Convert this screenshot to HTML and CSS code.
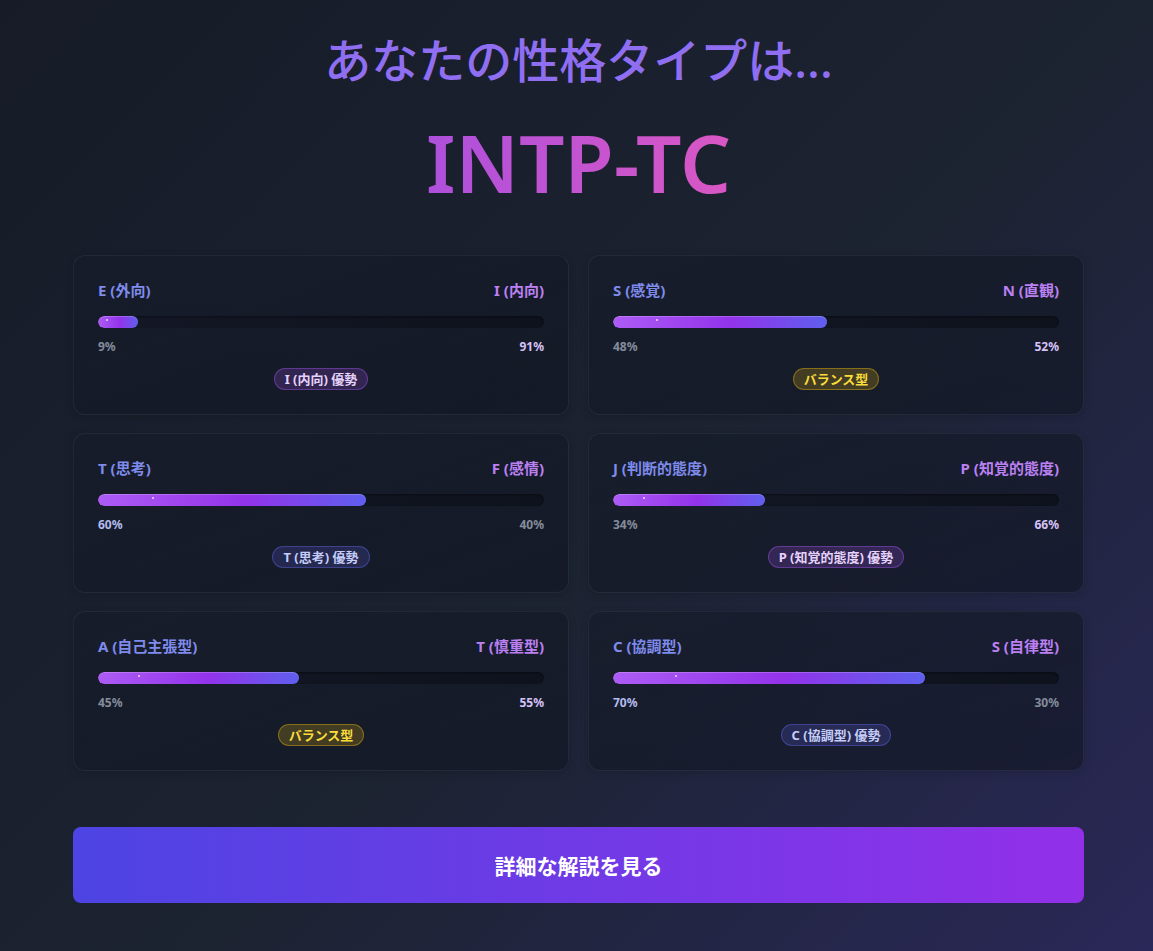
FILE: index.html
```html
<!DOCTYPE html>
<html lang="ja">
<head>
    <meta charset="UTF-8">
    <meta name="viewport" content="width=device-width, initial-scale=1.0">
    <title>性格タイプ診断 - 結果</title>
    <link rel="stylesheet" href="styles.css">
</head>
<body>
    <main class="result">
        <h1 class="result-title">あなたの性格タイプは...</h1>
        <div class="type-code">INTP-TC</div>

        <section class="axis-grid">
            <!-- E / I -->
            <div class="axis-card">
                <div class="axis-labels">
                    <span class="label-left">E (外向)</span>
                    <span class="label-right">I (内向)</span>
                </div>
                <div class="bar-track"><div class="bar-fill" style="width: 9%"></div></div>
                <div class="axis-percents">
                    <span class="pct">9%</span>
                    <span class="pct pct-right">91%</span>
                </div>
                <div class="badge-row"><span class="badge badge-right">I (内向) 優勢</span></div>
            </div>

            <!-- S / N -->
            <div class="axis-card">
                <div class="axis-labels">
                    <span class="label-left">S (感覚)</span>
                    <span class="label-right">N (直観)</span>
                </div>
                <div class="bar-track"><div class="bar-fill" style="width: 48%"></div></div>
                <div class="axis-percents">
                    <span class="pct">48%</span>
                    <span class="pct pct-right">52%</span>
                </div>
                <div class="badge-row"><span class="badge badge-balance">バランス型</span></div>
            </div>

            <!-- T / F -->
            <div class="axis-card">
                <div class="axis-labels">
                    <span class="label-left">T (思考)</span>
                    <span class="label-right">F (感情)</span>
                </div>
                <div class="bar-track"><div class="bar-fill" style="width: 60%"></div></div>
                <div class="axis-percents">
                    <span class="pct pct-left">60%</span>
                    <span class="pct">40%</span>
                </div>
                <div class="badge-row"><span class="badge badge-left">T (思考) 優勢</span></div>
            </div>

            <!-- J / P -->
            <div class="axis-card">
                <div class="axis-labels">
                    <span class="label-left">J (判断的態度)</span>
                    <span class="label-right">P (知覚的態度)</span>
                </div>
                <div class="bar-track"><div class="bar-fill" style="width: 34%"></div></div>
                <div class="axis-percents">
                    <span class="pct">34%</span>
                    <span class="pct pct-right">66%</span>
                </div>
                <div class="badge-row"><span class="badge badge-right">P (知覚的態度) 優勢</span></div>
            </div>

            <!-- A / T -->
            <div class="axis-card">
                <div class="axis-labels">
                    <span class="label-left">A (自己主張型)</span>
                    <span class="label-right">T (慎重型)</span>
                </div>
                <div class="bar-track"><div class="bar-fill" style="width: 45%"></div></div>
                <div class="axis-percents">
                    <span class="pct">45%</span>
                    <span class="pct pct-right">55%</span>
                </div>
                <div class="badge-row"><span class="badge badge-balance">バランス型</span></div>
            </div>

            <!-- C / S -->
            <div class="axis-card">
                <div class="axis-labels">
                    <span class="label-left">C (協調型)</span>
                    <span class="label-right">S (自律型)</span>
                </div>
                <div class="bar-track"><div class="bar-fill" style="width: 70%"></div></div>
                <div class="axis-percents">
                    <span class="pct pct-left">70%</span>
                    <span class="pct">30%</span>
                </div>
                <div class="badge-row"><span class="badge badge-left">C (協調型) 優勢</span></div>
            </div>
        </section>

        <button class="detail-button">詳細な解説を見る</button>
    </main>
</body>
</html>
```

FILE: styles.css
```css
html, body {
    height: 100%;
}
body {
    margin: 0;
    font-family: "Noto Sans", "Noto Sans CJK JP", sans-serif;
    color: #e5e7eb;
    background: linear-gradient(135deg, #161b27 0%, #1c2331 55%, #2a2858 100%);
    background-attachment: fixed;
}
.result {
    width: 1011px;
    margin: 0 auto;
    padding-top: 31px;
    position: relative;
    left: 2px;
}
.result-title {
    margin: 0;
    text-align: center;
    font-size: 47px;
    font-weight: 500;
    line-height: 58px;
    color: #8f6ef2;
}
.type-code {
    margin-top: 25px;
    text-align: center;
    font-size: 80px;
    line-height: 96px;
    font-weight: 600;
    background: linear-gradient(90deg, #ae50dc, #d957c4);
    -webkit-background-clip: text;
    background-clip: text;
    color: transparent;
    width: max-content;
    margin-left: auto;
    margin-right: auto;
}
.axis-grid {
    margin-top: 45px;
    display: grid;
    grid-template-columns: 1fr 1fr;
    gap: 18px 19px;
}
.axis-card {
    padding: 24px;
    border-radius: 12px;
    background: linear-gradient(160deg, rgba(22, 28, 42, 0.7), rgba(16, 21, 33, 0.6));
    border: 1px solid rgba(148, 163, 184, 0.1);
    box-shadow: 0 2px 8px rgba(0, 0, 0, 0.15);
}
.axis-labels,
.axis-percents {
    display: flex;
    justify-content: space-between;
}
.axis-labels {
    font-size: 15px;
    font-weight: 700;
    line-height: 20px;
}
.label-left {
    color: #7f8bec;
}
.label-right {
    color: #bb80f2;
}
.bar-track {
    margin-top: 16px;
    height: 12px;
    border-radius: 6px;
    background: linear-gradient(90deg, #141826, #0e121c);
    box-shadow: inset 0 1px 2px rgba(0, 0, 0, 0.4);
    overflow: hidden;
}
.bar-fill {
    position: relative;
    height: 100%;
    border-radius: 6px;
    background: linear-gradient(90deg, #ad5cf5, #9333ea 55%, #5f5fee);
    box-shadow: inset 0 1px 0 rgba(255, 255, 255, 0.2);
}
/* small shine dot on the bar */
.bar-fill::after {
    content: "";
    position: absolute;
    left: 20%;
    top: 3px;
    width: 2px;
    height: 2px;
    border-radius: 50%;
    background: rgba(255, 255, 255, 0.8);
}
.axis-percents {
    margin-top: 10px;
    font-size: 12px;
    font-weight: 700;
    line-height: 18px;
}
.pct {
    color: #848c9c;
}
.pct-left {
    color: #b3bcef;
}
.pct-right {
    color: #d6c2f7;
}
.badge-row {
    margin-top: 11px;
    text-align: center;
}
.badge {
    display: inline-block;
    padding: 1px 10px;
    border-radius: 11px;
    font-size: 13px;
    font-weight: 700;
    line-height: 18px;
}
.badge-right {
    background: rgba(168, 85, 247, 0.2);
    border: 1px solid rgba(168, 85, 247, 0.4);
    color: #e6d3fc;
}
.badge-left {
    background: rgba(99, 102, 241, 0.2);
    border: 1px solid rgba(99, 102, 241, 0.4);
    color: #c5cdf8;
}
.badge-balance {
    background: rgba(202, 160, 20, 0.25);
    border: 1px solid rgba(202, 160, 20, 0.5);
    color: #fadc3a;
}
.detail-button {
    display: block;
    width: 100%;
    margin-top: 56px;
    height: 76px;
    border: none;
    border-radius: 8px;
    background: linear-gradient(90deg, #4d44e3, #9230e9);
    color: #fff;
    font-family: inherit;
    font-size: 21px;
    font-weight: 700;
    cursor: pointer;
}
.detail-button:hover {
    filter: brightness(1.1);
}
```
